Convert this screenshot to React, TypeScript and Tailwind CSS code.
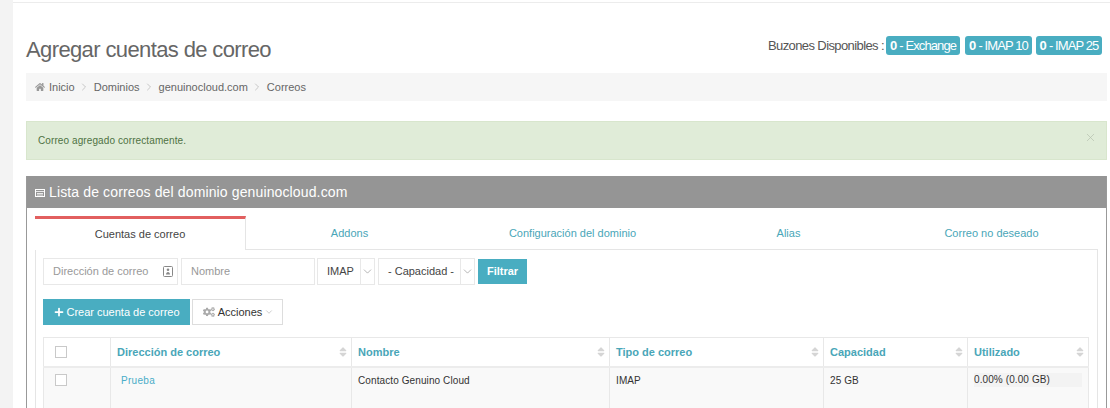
import { ChevronDown, ChevronRight, Plus, X } from 'lucide-react'
import { FaCogs, FaHome, FaSort } from 'react-icons/fa'

const tabs = [
  { label: 'Addons', width: 'w-[207px]' },
  { label: 'Configuración del dominio', width: 'w-[239px]' },
  { label: 'Alias', width: 'w-[193px]' },
  { label: 'Correo no deseado', width: 'w-[213px]' }
]
const columns = [
  { label: 'Dirección de correo', width: 'w-[241px]' },
  { label: 'Nombre', width: 'w-[258px]' },
  { label: 'Tipo de correo', width: 'w-[214px]' },
  { label: 'Capacidad', width: 'w-[144px]' },
  { label: 'Utilizado', width: '' }
]

function Crumb({ label }: { label: string }) {
  return (
    <>
      <ChevronRight size={12} strokeWidth={1.25} className="mx-[3.5px] text-[#aaa]" />
      <span>{label}</span>
    </>
  )
}

function Checkbox() {
  return <span className="block h-3 w-3 border border-[#c9c9c9] bg-white" />
}

function SelectBox({ label, width }: { label: string; width: string }) {
  return (
    <div className={`flex h-[27px] items-stretch border border-[#e8e8e8] ${width}`}>
      <span className="flex flex-1 items-center justify-center pl-[3px] text-[#444]">{label}</span>
      <span className="flex w-[14px] items-center justify-center border-l border-[#e8e8e8]">
        <ChevronDown size={13} strokeWidth={1} className="text-[#777]" />
      </span>
    </div>
  )
}

export default function App() {
  return (
    <div className="flex h-[408px] overflow-hidden bg-white font-['Liberation_Sans',Arial,sans-serif] text-[11px] text-[#555]">
      <div className="w-[13px] shrink-0 bg-[#f3f3f3]" />

      <main className="min-w-0 flex-1 pl-[13px] pr-[3px]">
        {/* Top rule */}
        <div className="-ml-[13px] -mr-[3px] mt-[2px] h-px bg-[#ececec]" />

        {/* Title and mailbox counters */}
        <div className="flex h-[70px] items-start justify-between pr-[5px]">
          <h1 className="mt-[33px] text-[22px] leading-[28px] tracking-[-0.62px] text-[#666]">Agregar cuentas de correo</h1>
          <div className="mt-[33px] flex h-[19px] items-center text-[13px] tracking-[-0.6px] text-[#555]">
            <span className="mr-[2px]">Buzones Disponibles :</span>
            <span className="flex h-[19px] w-[74px] items-center justify-center rounded-[3px] bg-[#49adc1] tracking-[-0.9px] text-white">
              <b className="mr-[3px]">0</b>- Exchange
            </span>
            <span className="ml-[5px] flex h-[19px] w-[67px] items-center justify-center rounded-[3px] bg-[#49adc1] tracking-[-0.9px] text-white">
              <b className="mr-[3px]">0</b>- IMAP 10
            </span>
            <span className="ml-[4px] flex h-[19px] w-[66px] items-center justify-center rounded-[3px] bg-[#49adc1] tracking-[-0.9px] text-white">
              <b className="mr-[3px]">0</b>- IMAP 25
            </span>
          </div>
        </div>

        {/* Breadcrumb */}
        <nav className="flex h-[28px] items-center bg-[#f6f6f6] pl-[9px] text-[#666]">
          <FaHome size={10} className="mr-[4px] text-[#999]" />
          <span>Inicio</span>
          <Crumb label="Dominios" />
          <Crumb label="genuinocloud.com" />
          <Crumb label="Correos" />
        </nav>

        {/* Alert */}
        <div className="mt-[20px] flex h-[39px] items-center justify-between border border-[#d8e6cd] bg-[#e0ecd8] pl-[11px] pr-[9px] text-[10px] tracking-[0.1px] text-[#4f7243]">
          <span>Correo agregado correctamente.</span>
          <X size={13} strokeWidth={1.25} className="-mt-[6px] text-[#b5bfae]" />
        </div>

        {/* Panel */}
        <section className="mt-[16px] border-x border-[#999]">
          <header className="flex h-[32px] items-center bg-[#959595] pl-[8px] text-[14px] tracking-[0.13px] text-white">
            <svg width="10" height="8" viewBox="0 0 10 8" className="mr-[4px] mt-px">
              <rect x="0.5" y="0.5" width="9" height="7" fill="none" stroke="#fff" />
              <path d="M1 2.5h8M2 4.5h6M2 6h6" stroke="#fff" strokeWidth="0.8" />
            </svg>
            Lista de correos del dominio genuinocloud.com
          </header>

          <div className="px-[8px] pt-[8px]">
            {/* Tabs */}
            <div className="flex h-[34px] text-[11px] text-[#49a6b8]">
              <div className="flex w-[211px] items-center justify-center border-r border-t-[3px] border-r-[#e5e5e5] border-t-[#e25f5f] bg-white text-[#444]">
                Cuentas de correo
              </div>
              <div className="flex flex-1 items-center border-b border-[#e5e5e5] pt-[2px]">
                {tabs.map((tab) => (
                  <span key={tab.label} className={`text-center ${tab.width}`}>
                    {tab.label}
                  </span>
                ))}
              </div>
            </div>

            <div className="border-x border-[#e5e5e5] px-[7px]">
              {/* Filters */}
              <div className="flex items-center pt-[8px]">
                <div className="flex h-[27px] w-[135px] items-center justify-between border border-[#e8e8e8] pl-[9px] pr-[4px] text-[#999]">
                  Dirección de correo
                  <svg width="10" height="11" viewBox="0 0 10 11">
                    <rect x="0.5" y="0.5" width="9" height="10" rx="1" fill="none" stroke="#888" />
                    <circle cx="5" cy="3.8" r="1.3" fill="#888" />
                    <path d="M3 8.5c0-3.4 4-3.4 4 0z" fill="#888" />
                  </svg>
                </div>
                <div className="ml-[3px] flex h-[27px] w-[134px] items-center border border-[#e8e8e8] pl-[9px] text-[#999]">Nombre</div>
                <div className="ml-[2px]">
                  <SelectBox label="IMAP" width="w-[58px]" />
                </div>
                <div className="ml-[3px]">
                  <SelectBox label="- Capacidad -" width="w-[97px]" />
                </div>
                <button className="ml-[3px] h-[25px] w-[49px] bg-[#49adc1] font-bold text-white">Filtrar</button>
              </div>

              {/* Actions */}
              <div className="mt-[14px] flex items-center">
                <button className="flex h-[26px] w-[147px] items-center justify-center bg-[#49adc1] text-white">
                  <Plus size={12} strokeWidth={3.5} className="mr-[1px]" />
                  Crear cuenta de correo
                </button>
                <button className="ml-[2px] flex h-[26px] w-[91px] items-center justify-center border border-[#ddd] bg-white pl-[2px] text-[#333]">
                  <FaCogs size={12} className="mr-[3px] text-[#aaa]" />
                  Acciones
                  <ChevronDown size={10} strokeWidth={1} className="ml-[2px] text-[#888]" />
                </button>
              </div>

              {/* Mail accounts */}
              <table className="mt-[12px] w-[1046px] table-fixed border-collapse border border-[#e8e8e8]">
                <thead>
                  <tr className="h-[29px] border-b-2 border-[#ececec]">
                    <th className="w-[67px] border-r border-[#e8e8e8] pl-[11px]">
                      <Checkbox />
                    </th>
                    {columns.map((col) => (
                      <th key={col.label} className={`border-r border-[#e8e8e8] pl-[6px] pr-[2px] text-left text-[#49a6b8] ${col.width}`}>
                        <span className="flex items-center justify-between">
                          {col.label}
                          <FaSort size={12} className="text-[#d5d5d5]" />
                        </span>
                      </th>
                    ))}
                  </tr>
                </thead>
                <tbody>
                  <tr className="h-[60px] bg-[#f9f9f9] align-top text-[10px] tracking-[0.1px] text-[#333]">
                    <td className="border-r border-[#e8e8e8] pl-[11px] pt-[6px]">
                      <Checkbox />
                    </td>
                    <td className="border-r border-[#e8e8e8] pl-[10px] pt-[5px] tracking-[0.3px] text-[#49adc8]">Prueba</td>
                    <td className="border-r border-[#e8e8e8] px-[6px] pt-[5px]">Contacto Genuino Cloud</td>
                    <td className="border-r border-[#e8e8e8] px-[6px] pt-[5px]">IMAP</td>
                    <td className="border-r border-[#e8e8e8] px-[6px] pt-[5px]">25 GB</td>
                    <td className="border-r border-[#e8e8e8] px-[6px] pt-[5px]">
                      <div className="h-[14px] bg-[#f3f3f3] leading-[14px]">0.00% (0.00 GB)</div>
                    </td>
                  </tr>
                </tbody>
              </table>
            </div>
          </div>
        </section>
      </main>
    </div>
  )
}
